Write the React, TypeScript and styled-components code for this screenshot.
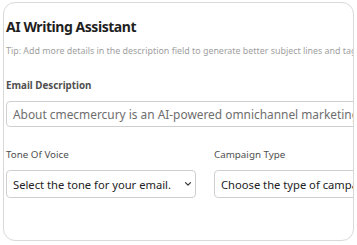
import React from 'react';
import styled, { createGlobalStyle } from 'styled-components';

const GlobalStyle = createGlobalStyle`
  html, body {
    margin: 0;
    padding: 0;
    background: #fff;
  }
  body {
    font-family: "Noto Sans", "Open Sans", sans-serif;
  }
`;

const Page = styled.div`
  padding: 2px 3px 3px 3px;
`;

const Card = styled.div`
  width: 351px;
  height: 239px;
  border: 1px solid #d9d9d9;
  border-radius: 12px;
  overflow: hidden;
  box-sizing: border-box;
`;

const Inner = styled.div`
  width: 400px;
  padding: 14px 0 0 2px;
  display: flex;
  flex-direction: column;
`;

const Title = styled.h2`
  margin: 0;
  font-size: 14px;
  font-weight: 700;
  color: #1f1f1f;
  line-height: 20px;
  letter-spacing: -0.45px;
`;

const Tip = styled.p`
  margin: 7px 0 0;
  font-size: 8.9px;
  color: #a0a0a0;
  line-height: 14px;
  white-space: nowrap;
`;

const Field = styled.div<{ $top?: number }>`
  display: flex;
  flex-direction: column;
  gap: 8px;
  margin-top: ${(p) => p.$top ?? 0}px;
`;

const Label = styled.label<{ $bold?: boolean }>`
  font-size: 9.8px;
  font-weight: ${(p) => (p.$bold ? 700 : 400)};
  color: #4f4f4f;
  line-height: 14px;
`;

const Input = styled.div`
  height: 26px;
  border: 1px solid #cfcfcf;
  border-radius: 4px;
  padding: 0 6px;
  display: flex;
  align-items: center;
  font-size: 11.9px;
  color: #6e6e6e;
  white-space: nowrap;
  overflow: hidden;
  box-sizing: border-box;
`;

const Select = styled(Input)`
  height: 28px;
  justify-content: space-between;
  font-size: 11.2px;
  color: #222;
  padding-right: 3px;
`;

const Row = styled.div`
  display: grid;
  grid-template-columns: 190px 190px;
  column-gap: 18px;
  margin-top: 21px;
`;

const Chevron = () => (
  <svg width="8" height="6" viewBox="0 0 8 6" fill="none">
    <path d="M1.5 1.6 L4 4.1 L6.5 1.6" stroke="#333" strokeWidth="1.2" strokeLinecap="round" strokeLinejoin="round" />
  </svg>
);

const App = () => {
  return (
    <Page>
      <GlobalStyle />
      <Card>
        <Inner>
          <Title>AI Writing Assistant</Title>
          <Tip>Tip: Add more details in the description field to generate better subject lines and tags.</Tip>
          <Field $top={21}>
            <Label $bold>Email Description</Label>
            <Input>About cmecmercury is an AI-powered omnichannel marketing platform</Input>
          </Field>
          <Row>
            <Field>
              <Label>Tone Of Voice</Label>
              <Select>
                Select the tone for your email.
                <Chevron />
              </Select>
            </Field>
            <Field>
              <Label>Campaign Type</Label>
              <Select>Choose the type of campaign</Select>
            </Field>
          </Row>
        </Inner>
      </Card>
    </Page>
  );
};

export default App;
